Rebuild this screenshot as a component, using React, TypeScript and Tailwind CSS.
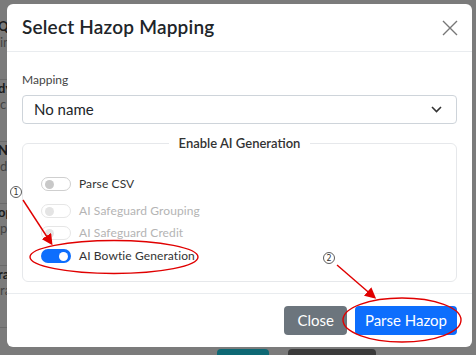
import React from 'react';

const bgRows = [
  { t: 'Quick', s: 'in' },
  { t: 'dy', s: 'c' },
  { t: 'New', s: 'dy' },
  { t: 'open', s: 'po' },
  { t: 'ran', s: 'ra' },
];

function Switch({ on, faded }: { on?: boolean; faded?: boolean }) {
  if (on) {
    return (
      <span className="flex h-[14px] w-[30px] items-center justify-end rounded-full bg-[#0d6efd] pr-[3px]">
        <span className="h-[9px] w-[9px] rounded-full bg-white" />
      </span>
    );
  }
  return (
    <span
      className={`flex h-[14px] w-[30px] items-center rounded-full border pl-[3px] ${
        faded ? 'border-[#e6e6e6]' : 'border-[#cfcfcf]'
      }`}
    >
      <span className={`h-[9px] w-[9px] rounded-full ${faded ? 'bg-[#e4e4e4]' : 'bg-[#c8c8c8]'}`} />
    </span>
  );
}

function Row({ label, on, faded }: { label: string; on?: boolean; faded?: boolean }) {
  return (
    <div className="flex h-[16px] items-center gap-[8px]">
      <Switch on={on} faded={faded} />
      <span className={`text-[12px] leading-[16px] tracking-[0.1px] ${faded ? 'text-[#b4b4b4]' : 'text-[#333]'}`}>
        {label}
      </span>
    </div>
  );
}

export default function App() {
  return (
    <div
      className="relative h-[355px] w-[476px] overflow-hidden bg-[#7b7b7b]"
      style={{ fontFamily: 'Lato, "Open Sans", sans-serif' }}
    >
      {/* page behind the backdrop */}
      <div className="flex w-[7px] flex-col overflow-hidden pt-[18px] text-[#1c1c1c]">
        {bgRows.map((r) => (
          <div key={r.t} className="flex h-[62px] flex-col border-b border-[#6a6a6a] text-[13px] leading-[16px]">
            <span className="-ml-[2px] font-bold">{r.t}</span>
            <span className="text-[#444]">{r.s}</span>
          </div>
        ))}
      </div>
      <div className="absolute bottom-[-10px] left-[217px] flex gap-[19px]">
        <span className="h-[16px] w-[52px] rounded-[4px] bg-[#0e6874]" />
        <span className="h-[16px] w-[88px] rounded-[4px] bg-[#3b3b3b]" />
      </div>

      {/* modal */}
      <div className="absolute left-[7px] top-[4px] flex h-[343px] w-[465px] flex-col rounded-[6px] bg-white text-[#212529]">
        <div className="flex h-[48px] items-center justify-between border-b border-[#e9ecef] pl-[15px] pr-[14px]">
          <span className="text-[19px] font-semibold tracking-[0.2px]">Select Hazop Mapping</span>
          <svg width="16" height="16" viewBox="0 0 16 16" stroke="#777" strokeWidth="1.4">
            <path d="M1 1 L15 15 M15 1 L1 15" />
          </svg>
        </div>

        <div className="flex flex-1 flex-col px-[15px] pt-[19px]">
          <span className="text-[12px] text-[#444]">Mapping</span>
          <div className="mt-[6px] flex h-[29px] items-center justify-between rounded-[4px] border border-[#ced4da] pl-[11px] pr-[14px]">
            <span className="text-[15px]">No name</span>
            <svg width="11" height="7" viewBox="0 0 11 7" fill="none" stroke="#333" strokeWidth="1.6">
              <path d="M1 1 L5.5 5.5 L10 1" />
            </svg>
          </div>

          <fieldset className="mt-[11px] h-[147px] rounded-[6px] border border-[#e6e8eb] px-[18px]">
            <legend className="mx-auto px-[10px] text-[13px] font-semibold leading-[16px] text-[#333]">
              Enable AI Generation
            </legend>
            <div className="flex flex-col pt-[25px]">
              <Row label="Parse CSV" />
              <div className="mt-[11px]">
                <Row label="AI Safeguard Grouping" faded />
              </div>
              <div className="mt-[6px]">
                <Row label="AI Safeguard Credit" faded />
              </div>
              <div className="mt-[7px]">
                <Row label="AI Bowtie Generation" on />
              </div>
            </div>
          </fieldset>
        </div>

        <div className="flex h-[54px] items-center justify-end gap-[8px] border-t border-[#e9ecef] pr-[15px]">
          <button className="h-[29px] rounded-[4px] bg-[#6c757d] px-[13px] text-[15px] text-white">Close</button>
          <button className="h-[29px] rounded-[4px] bg-[#0d6efd] px-[10px] text-[15px] text-white">Parse Hazop</button>
        </div>
      </div>

      {/* annotations */}
      <svg className="pointer-events-none absolute inset-0" width="476" height="355" viewBox="0 0 476 355">
        <defs>
          <marker id="ah" markerWidth="8" markerHeight="8" refX="6" refY="4" orient="auto">
            <path d="M0 0 L8 4 L0 8 Z" fill="#e00000" />
          </marker>
        </defs>
        <circle cx="16" cy="192" r="5.5" fill="white" stroke="#333" strokeWidth="0.8" />
        <text x="16" y="195" fontSize="8" textAnchor="middle" fill="#333" fontFamily="DejaVu Sans">1</text>
        <path d="M23 200 L51 243" stroke="#e00000" strokeWidth="1.4" markerEnd="url(#ah)" />
        <ellipse cx="114" cy="257" rx="84" ry="16.5" fill="none" stroke="#e00000" strokeWidth="1.4" />

        <circle cx="329" cy="258" r="5.5" fill="white" stroke="#333" strokeWidth="0.8" />
        <text x="329" y="261" fontSize="8" textAnchor="middle" fill="#333" fontFamily="DejaVu Sans">2</text>
        <path d="M337 265 L374 297" stroke="#e00000" strokeWidth="1.4" markerEnd="url(#ah)" />
        <ellipse cx="402" cy="320" rx="59" ry="22" fill="none" stroke="#e00000" strokeWidth="1.4" />
      </svg>
    </div>
  );
}
